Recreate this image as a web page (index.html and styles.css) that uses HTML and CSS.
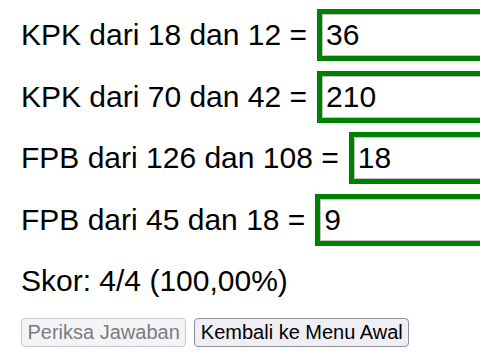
FILE: index.html
```html
<!DOCTYPE html>
<html lang="id">
<head>
<meta charset="utf-8">
<title>Kuis KPK dan FPB</title>
<link rel="stylesheet" href="styles.css">
</head>
<body>
<div class="quiz">
  <div class="row"><span class="label">KPK dari 18 dan 12 =</span><span class="field"><input class="answer" type="text" value="36"></span></div>
  <div class="row"><span class="label">KPK dari 70 dan 42 =</span><span class="field"><input class="answer" type="text" value="210"></span></div>
  <div class="row"><span class="label">FPB dari 126 dan 108 =</span><span class="field"><input class="answer" type="text" value="18"></span></div>
  <div class="row"><span class="label">FPB dari 45 dan 18 =</span><span class="field"><input class="answer" type="text" value="9"></span></div>
  <div class="row score">Skor: 4/4 (100,00%)</div>
  <div class="buttons">
    <button class="btn" disabled>Periksa Jawaban</button>
    <button class="btn">Kembali ke Menu Awal</button>
  </div>
</div>
</body>
</html>
```
FILE: styles.css
```css
html, body {
  margin: 0;
  padding: 0;
  background: #fff;
  overflow: hidden;
}
body {
  font-family: "Liberation Sans", Arial, sans-serif;
  color: #000;
}
.quiz {
  box-sizing: border-box;
  width: 480px;
  padding: 9px 0 0 21px;
  display: flex;
  flex-direction: column;
  gap: 9.5px;
}
.row {
  display: flex;
  align-items: center;
  height: 52px;
  column-gap: 10px;
  font-size: 30px;
  white-space: nowrap;
}
.label {
  flex: none;
}
.field {
  flex: 1;
  min-width: 0;
  display: flex;
  border: 5px solid #008000;
  border-right: 0;
}
.answer {
  flex: 1;
  min-width: 0;
  box-sizing: border-box;
  height: 42px;
  margin: 0;
  padding: 0 3px;
  font-family: "Liberation Sans", Arial, sans-serif;
  font-size: 30px;
  color: #000;
  background: #fff;
  border: 1px solid #c4c4c4;
  border-right: 0;
  outline: none;
  border-radius: 0;
}
.buttons {
  display: flex;
  gap: 8px;
  margin-top: 1.5px;
}
.btn {
  box-sizing: border-box;
  height: 29px;
  margin: 0;
  padding: 0 5.5px;
  font-family: "Liberation Sans", Arial, sans-serif;
  font-size: 20px;
  color: #000;
  background: #efeff3;
  border: 1px solid #8f8f9d;
  border-radius: 4px;
}
.btn:disabled {
  color: #7b7b80;
  background: #f4f4f7;
  border-color: #c8c8d0;
}
```
